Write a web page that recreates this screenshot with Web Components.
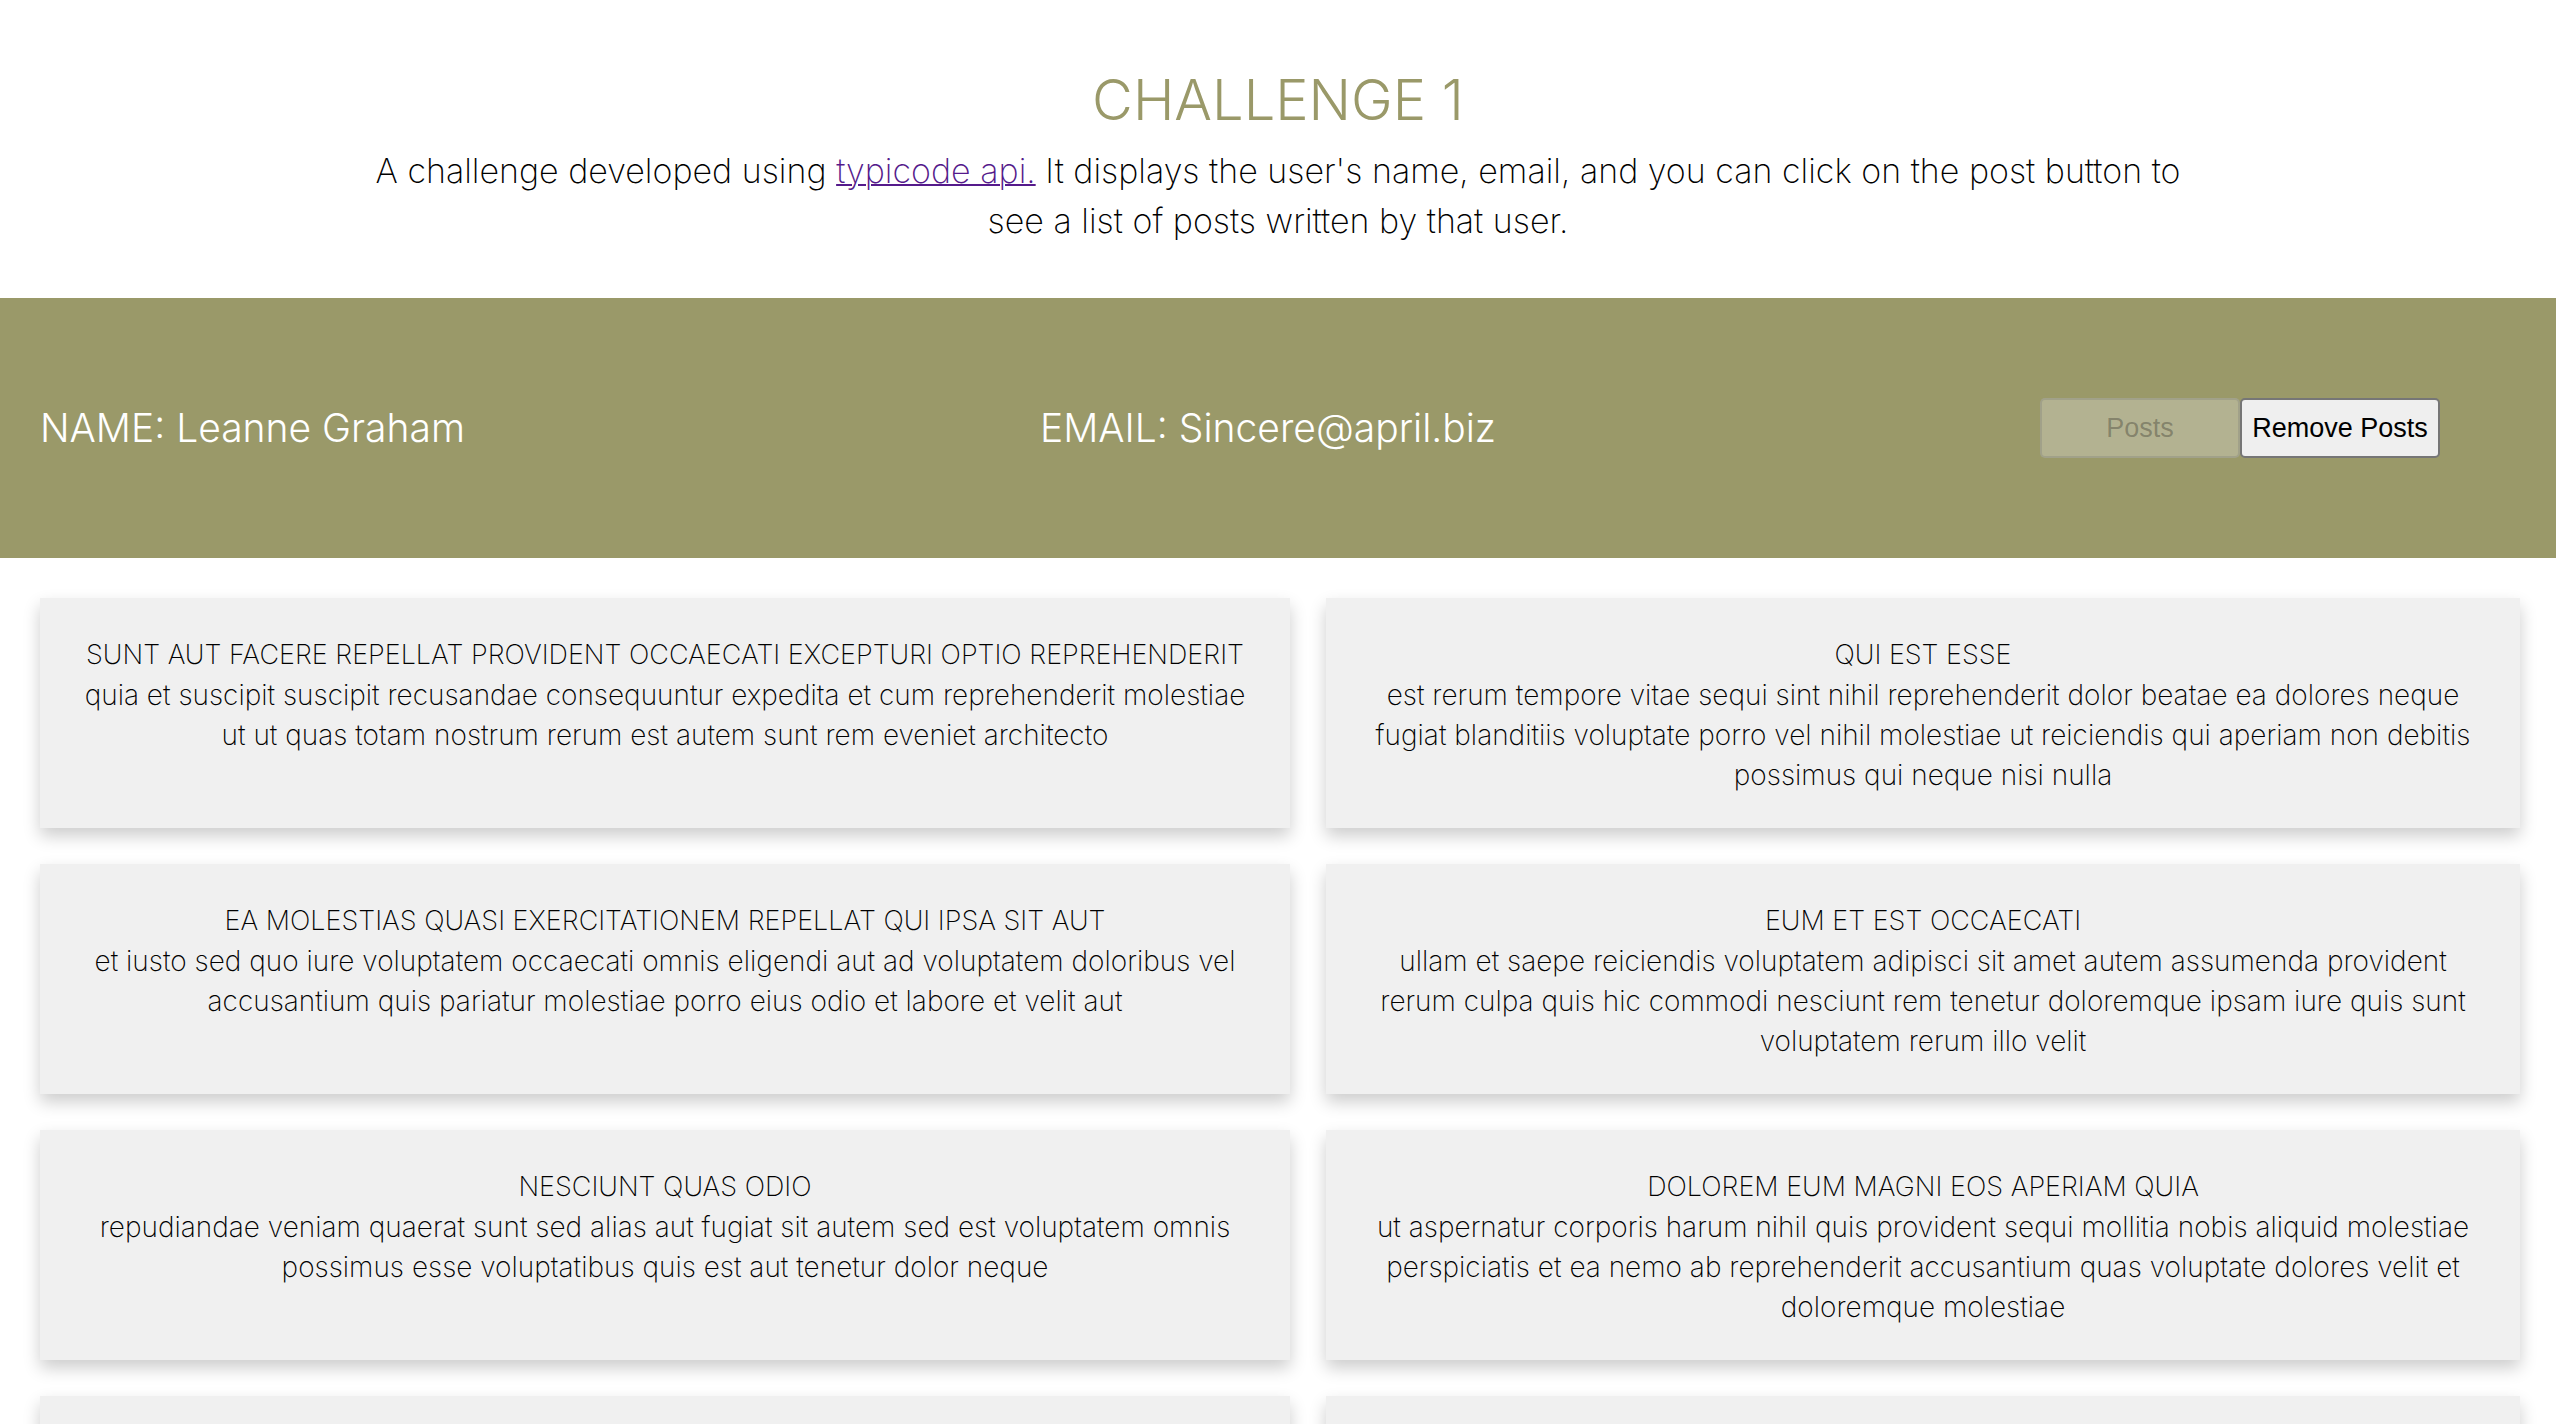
<!DOCTYPE html>
<html lang="en">
<head>
<meta charset="utf-8">
<title>Challenge 1</title>
<style>
  body {
    margin: 0;
    background: #fff;
    color: #000;
    font-family: Inter, "Open Sans", sans-serif;
    font-weight: 250;
    --olive: #9a9969;
    --card: #f0f0f0;
  }
</style>
</head>
<body>
<challenge-app></challenge-app>

<template id="page-header">
  <style>
    :host { display: block; padding: 58px 0 52px; text-align: center; }
    h1 { margin: 0 0 4px; font-size: 56px; line-height: 84px; font-weight: 300; color: var(--olive); text-transform: uppercase; }
    p { width: 73%; margin: 0 auto; font-size: 34px; line-height: 50px; }
    ::slotted(a) { color: #551a8b; text-decoration-thickness: 2px; }
  </style>
  <h1><slot name="title"></slot></h1>
  <p><slot></slot></p>
</template>

<template id="user-bar">
  <style>
    :host {
      display: grid;
      grid-template-columns: 1fr 1fr 476px;
      align-items: center;
      box-sizing: border-box;
      min-height: 260px;
      padding: 40px;
      background: var(--olive);
      color: #fff;
      font-size: 39px;
      line-height: 60px;
      font-weight: 300;
    }
    p { margin: 0; }
    .actions { display: flex; }
    button {
      box-sizing: border-box;
      width: 200px;
      height: 60px;
      padding: 0;
      border: 2px solid #767676;
      border-radius: 5px;
      background: #efefef;
      color: #000;
      font: 400 27px "Liberation Sans", Arial, sans-serif;
    }
    button:disabled {
      border-color: rgba(118, 118, 118, 0.3);
      background: rgba(239, 239, 239, 0.3);
      color: rgba(16, 16, 16, 0.3);
    }
  </style>
  <p>NAME: <slot name="name"></slot></p>
  <p>EMAIL: <slot name="email"></slot></p>
  <div class="actions">
    <button type="button" id="show" disabled>Posts</button>
    <button type="button" id="remove">Remove Posts</button>
  </div>
</template>

<template id="post-card">
  <style>
    :host {
      display: block;
      box-sizing: border-box;
      min-height: 230px;
      padding: 37px 32px 33px;
      background: var(--card);
      box-shadow: 0 8px 16px rgba(0, 0, 0, 0.2);
      text-align: center;
      line-height: 40px;
    }
    h2 { margin: 0; font-size: 27px; font-weight: 250; text-transform: uppercase; }
    p { margin: 0; font-size: 28px; }
  </style>
  <h2><slot name="title"></slot></h2>
  <p><slot></slot></p>
</template>

<template id="post-list">
  <style>
    :host {
      display: grid;
      grid-template-columns: 1250fr 1194fr;
      gap: 36px;
      padding: 40px 36px 40px 40px;
    }
  </style>
  <slot></slot>
</template>

<template id="challenge-app">
  <style>:host { display: block; }</style>
  <page-header>
    <span slot="title">Challenge 1</span>A challenge developed using <a href="https://jsonplaceholder.typicode.com/">typicode api.</a> It displays the user's name, email, and you can click on the post button to see a list of posts written by that user.
  </page-header>
  <user-bar>
    <span slot="name">Leanne Graham</span>
    <span slot="email">Sincere@april.biz</span>
  </user-bar>
  <post-list></post-list>
</template>

<script>
const posts = [
  ["sunt aut facere repellat provident occaecati excepturi optio reprehenderit",
   "quia et suscipit suscipit recusandae consequuntur expedita et cum reprehenderit molestiae ut ut quas totam nostrum rerum est autem sunt rem eveniet architecto"],
  ["qui est esse",
   "est rerum tempore vitae sequi sint nihil reprehenderit dolor beatae ea dolores neque fugiat blanditiis voluptate porro vel nihil molestiae ut reiciendis qui aperiam non debitis possimus qui neque nisi nulla"],
  ["ea molestias quasi exercitationem repellat qui ipsa sit aut",
   "et iusto sed quo iure voluptatem occaecati omnis eligendi aut ad voluptatem doloribus vel accusantium quis pariatur molestiae porro eius odio et labore et velit aut"],
  ["eum et est occaecati",
   "ullam et saepe reiciendis voluptatem adipisci sit amet autem assumenda provident rerum culpa quis hic commodi nesciunt rem tenetur doloremque ipsam iure quis sunt voluptatem rerum illo velit"],
  ["nesciunt quas odio",
   "repudiandae veniam quaerat sunt sed alias aut fugiat sit autem sed est voluptatem omnis possimus esse voluptatibus quis est aut tenetur dolor neque"],
  ["dolorem eum magni eos aperiam quia",
   "ut aspernatur corporis harum nihil quis provident sequi mollitia nobis aliquid molestiae perspiciatis et ea nemo ab reprehenderit accusantium quas voluptate dolores velit et doloremque molestiae"],
  ["", ""],
  ["", ""]
];

class TemplateElement extends HTMLElement {
  constructor() {
    super();
    const template = document.getElementById(this.localName);
    this.attachShadow({ mode: "open" }).append(template.content.cloneNode(true));
  }
}

class PageHeader extends TemplateElement {}
class PostCard extends TemplateElement {}

class UserBar extends TemplateElement {
  connectedCallback() {
    const show = this.shadowRoot.getElementById("show");
    const remove = this.shadowRoot.getElementById("remove");
    const toggle = visible => {
      show.disabled = visible;
      remove.disabled = !visible;
      this.dispatchEvent(new CustomEvent("posts-toggle", { detail: visible, bubbles: true }));
    };
    show.addEventListener("click", () => toggle(true));
    remove.addEventListener("click", () => toggle(false));
  }
}

class PostList extends TemplateElement {
  show(items) {
    this.replaceChildren(...items.map(([title, body]) => {
      const card = document.createElement("post-card");
      const heading = document.createElement("span");
      heading.slot = "title";
      heading.textContent = title;
      card.append(heading, body);
      return card;
    }));
  }
}

class ChallengeApp extends TemplateElement {
  connectedCallback() {
    const list = this.shadowRoot.querySelector("post-list");
    list.show(posts);
    this.shadowRoot.addEventListener("posts-toggle", e => list.show(e.detail ? posts : []));
  }
}

customElements.define("page-header", PageHeader);
customElements.define("user-bar", UserBar);
customElements.define("post-card", PostCard);
customElements.define("post-list", PostList);
customElements.define("challenge-app", ChallengeApp);
</script>
</body>
</html>
